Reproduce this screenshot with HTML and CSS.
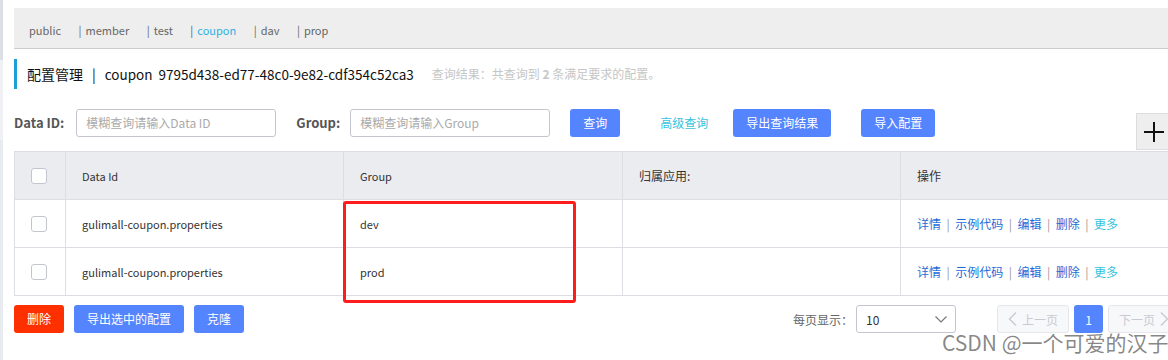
FILE: index.html
```html
<!DOCTYPE html>
<html lang="zh-CN">
<head>
<meta charset="utf-8">
<title>配置管理</title>
<link rel="stylesheet" href="styles.css">
</head>
<body>
<div class="side"></div>
<div class="page">
  <div class="nav">
    <span class="nav-item">public</span>
    <span class="nav-item"><span class="pipe">|</span>member</span>
    <span class="nav-item"><span class="pipe">|</span>test</span>
    <span class="nav-item active"><span class="pipe">|</span>coupon</span>
    <span class="nav-item"><span class="pipe">|</span>dav</span>
    <span class="nav-item"><span class="pipe">|</span>prop</span>
  </div>

  <div class="title">
    <span class="title-main">配置管理</span>
    <span class="title-sep">|</span>
    <span class="title-ns">coupon</span>
    <span class="title-id">9795d438-ed77-48c0-9e82-cdf354c52ca3</span>
    <span class="title-info">查询结果：共查询到 <b>2</b> 条满足要求的配置。</span>
  </div>

  <div class="filters">
    <label class="f-label">Data ID:</label>
    <div class="input">模糊查询请输入Data ID</div>
    <label class="f-label f-label-2">Group:</label>
    <div class="input">模糊查询请输入Group</div>
    <button class="btn btn-query">查询</button>
    <span class="text-link">高级查询</span>
    <button class="btn btn-export">导出查询结果</button>
    <button class="btn btn-import">导入配置</button>
    <div class="plus">
      <svg width="20" height="20" viewBox="0 0 20 20"><path d="M10 0V20M0 10H20" stroke="#111" stroke-width="2"/></svg>
    </div>
  </div>

  <div class="table">
    <div class="row head">
      <div class="cell c-check"><span class="checkbox"></span></div>
      <div class="cell en">Data Id</div>
      <div class="cell en">Group</div>
      <div class="cell">归属应用:</div>
      <div class="cell">操作</div>
    </div>
    <div class="row">
      <div class="cell c-check"><span class="checkbox"></span></div>
      <div class="cell en">gulimall-coupon.properties</div>
      <div class="cell en">dev</div>
      <div class="cell"></div>
      <div class="cell ops"><a>详情</a><i>|</i><a>示例代码</a><i>|</i><a>编辑</a><i>|</i><a>删除</a><i>|</i><a class="more">更多</a></div>
    </div>
    <div class="row">
      <div class="cell c-check"><span class="checkbox"></span></div>
      <div class="cell en">gulimall-coupon.properties</div>
      <div class="cell en">prod</div>
      <div class="cell"></div>
      <div class="cell ops"><a>详情</a><i>|</i><a>示例代码</a><i>|</i><a>编辑</a><i>|</i><a>删除</a><i>|</i><a class="more">更多</a></div>
    </div>
  </div>

  <div class="footer">
    <button class="btn btn-danger">删除</button>
    <button class="btn btn-export-sel">导出选中的配置</button>
    <button class="btn btn-clone">克隆</button>
    <div class="pager">
      <span class="pager-label">每页显示：</span>
      <div class="select">
        <span>10</span>
        <svg width="12" height="7" viewBox="0 0 12 7"><path d="M0.5 0.5L6 6L11.5 0.5" fill="none" stroke="#777" stroke-width="1.2"/></svg>
      </div>
      <div class="pages">
        <span class="pg pg-disabled pg-prev"><svg width="9" height="14" viewBox="0 0 9 14"><path d="M8 0.5L1.5 7L8 13.5" fill="none" stroke="#c8cad2" stroke-width="1.4"/></svg>上一页</span>
        <span class="pg pg-current">1</span>
        <span class="pg pg-disabled pg-next">下一页<svg width="9" height="14" viewBox="0 0 9 14"><path d="M1 0.5L7.5 7L1 13.5" fill="none" stroke="#c8cad2" stroke-width="1.4"/></svg></span>
      </div>
    </div>
  </div>
</div>

<div class="mark-box"></div>
<div class="watermark">CSDN @一个可爱的汉子</div>
</body>
</html>
```

FILE: styles.css
```css
html, body {
  margin: 0;
  padding: 0;
  overflow: hidden;
  background: #ffffff;
}
body {
  width: 1168px;
  height: 360px;
  display: flex;
  font-family: "Noto Sans CJK SC", "Noto Sans", sans-serif;
  font-size: 12px;
  color: #333;
  position: relative;
}
.side {
  width: 3px;
  flex-shrink: 0;
  background: linear-gradient(#dcdfe5 0, #dcdfe5 60px, #f0f1f4 60px, #f0f1f4 140px, #e8ebf0 140px);
}
.page {
  width: 1166px;
  flex-shrink: 0;
  margin-left: 11px;
  padding-top: 8px;
}

/* nav */
.nav {
  height: 41px;
  background: #eeeeee;
  border-bottom: 1px solid #cccccc;
  display: flex;
  align-items: center;
  padding-left: 15px;
  padding-top: 3px;
  box-sizing: border-box;
  color: #666;
  font-size: 11px;
}
.nav-item { margin-right: 17.5px; }
.nav-item .pipe { margin-right: 4px; color: #666; }
.nav-item.active { color: #2bb2e3; }
.nav-item.active .pipe { color: #555; }

/* title */
.title {
  margin-top: 10px;
  height: 30px;
  line-height: 30px;
  border-left: 3px solid #1b9fd6;
  padding-left: 10px;
  font-size: 14px;
  color: #111;
  display: flex;
  align-items: center;
}
.title-sep { margin: 0 9px; }
.title-ns, .title-id { font-size: 13.5px; }
.title-id { margin-left: 6px; }
.title-info { margin-left: 18px; font-size: 12px; color: #c6c6c6; }
.title-info b { font-weight: bold; }

/* filters */
.filters {
  margin-top: 20px;
  display: flex;
  align-items: flex-start;
}
.f-label {
  line-height: 28px;
  font-size: 13px;
  font-weight: bold;
  color: #555;
  margin-right: 12px;
}
.f-label-2 { margin-left: 20px; margin-right: 10px; }
.input {
  width: 200px;
  height: 28px;
  box-sizing: border-box;
  border: 1px solid #c4c6cf;
  border-radius: 3px;
  padding-left: 9px;
  line-height: 26px;
  color: #aaa;
  font-size: 12px;
}
.btn {
  height: 28px;
  padding: 0 13px;
  border: none;
  border-radius: 3px;
  background: #5584ff;
  color: #fff;
  font-family: inherit;
  font-size: 12px;
  line-height: 28px;
}
.btn-query { margin-left: 20px; }
.text-link {
  margin-left: 40px;
  line-height: 28px;
  color: #36c3dc;
}
.btn-export { margin-left: 25px; }
.btn-import { margin-left: 30px; }
.plus {
  margin-left: auto;
  margin-right: 8px;
  margin-top: 4px;
  width: 36px;
  height: 37px;
  box-sizing: border-box;
  background: #eeeeee;
  border: 1px solid #dddddd;
  display: flex;
  align-items: center;
  justify-content: center;
}

/* table */
.table {
  margin-top: 1px;
  border-top: 1px solid #dcdee3;
  border-left: 1px solid #dcdee3;
}
.row {
  display: grid;
  grid-template-columns: 51px 278px 279px 278px 1fr;
  height: 48px;
}
.cell {
  border-right: 1px solid #dcdee3;
  border-bottom: 1px solid #dcdee3;
  padding-left: 16px;
  display: flex;
  align-items: center;
  color: #333;
}
.cell.en { font-size: 11px; }
.head .cell { background: #ebecf0; }
.checkbox {
  width: 16px;
  height: 16px;
  box-sizing: border-box;
  border: 1px solid #c4c6cf;
  border-radius: 3px;
  background: #fff;
}
.ops a { color: #1f6bd6; }
.ops a.more { color: #36c3dc; }
.ops i { font-style: normal; color: #999; margin: 0 5.5px; }

/* footer */
.footer {
  margin-top: 9px;
  display: flex;
  align-items: center;
}
.btn-danger { background: #ff3000; }
.btn-export-sel { margin-left: 10px; }
.btn-clone { margin-left: 10px; }
.pager {
  margin-left: auto;
  display: flex;
  align-items: center;
}
.pager-label { color: #666; margin-right: 3px; }
.select {
  width: 100px;
  height: 28px;
  box-sizing: border-box;
  border: 1px solid #c4c6cf;
  border-radius: 3px;
  display: flex;
  align-items: center;
  justify-content: space-between;
  padding: 0 8px 0 9px;
  color: #333;
}
.pages {
  margin-left: 41px;
  display: flex;
  align-items: center;
}
.pg {
  height: 28px;
  box-sizing: border-box;
  border-radius: 3px;
  display: flex;
  align-items: center;
  justify-content: center;
}
.pg-disabled {
  width: 72px;
  background: #f7f8fa;
  border: 1px solid #e6e7eb;
  color: #c8cad2;
}
.pg-prev svg { margin-right: 5px; }
.pg-next svg { margin-left: 5px; }
.pg-current {
  width: 29px;
  margin: 0 5px;
  background: #5584ff;
  color: #fff;
}

/* overlays */
.mark-box {
  position: absolute;
  left: 343px;
  top: 201px;
  width: 233px;
  height: 102px;
  box-sizing: border-box;
  border: 3px solid #ff1c1c;
  border-radius: 3px;
}
.watermark {
  position: absolute;
  left: 942px;
  top: 331px;
  font-size: 21px;
  line-height: 22px;
  color: rgba(95, 95, 95, 0.75);
  white-space: nowrap;
}
```
